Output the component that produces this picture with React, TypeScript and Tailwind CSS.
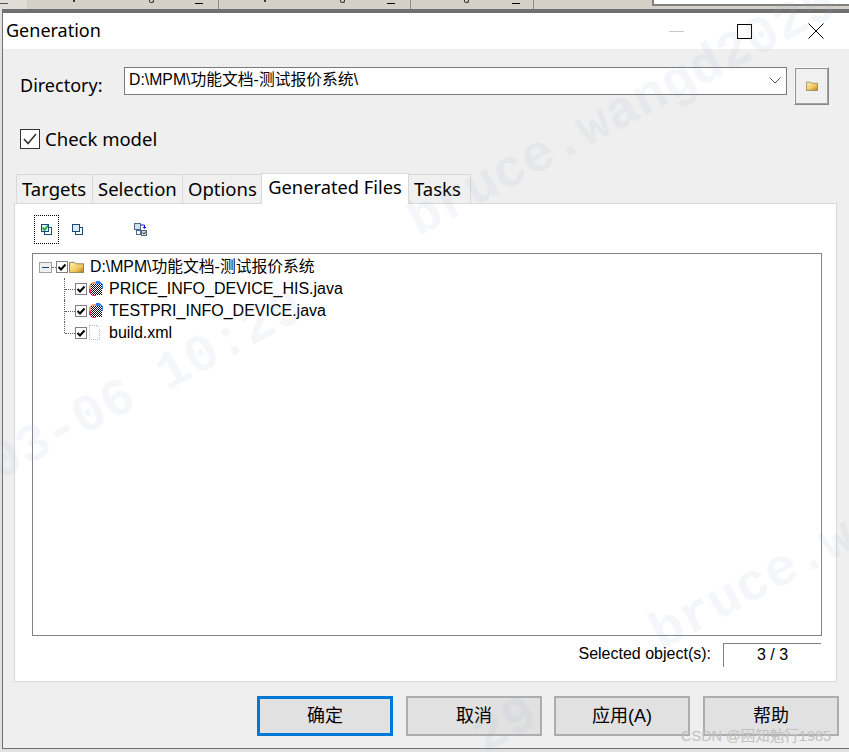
const sans = "font-['Segoe_UI','Noto_Sans','Noto_Sans_CJK_SC',sans-serif]";
const arial = "font-['Liberation_Sans','Noto_Sans_CJK_SC',sans-serif]";

const TABS = [
  { label: "Targets", w: "w-[76px]" },
  { label: "Selection", w: "w-[90px]" },
  { label: "Options", w: "w-[79px]" },
];

const FILES = [
  { name: "PRICE_INFO_DEVICE_HIS.java", kind: "java" },
  { name: "TESTPRI_INFO_DEVICE.java", kind: "java" },
  { name: "build.xml", kind: "xml" },
];

const BUTTONS = ["确定", "取消", "应用(A)", "帮助"];

function TreeCheck() {
  return (
    <span className="flex h-[12px] w-[12px] shrink-0 items-center justify-center border border-[#808080] bg-white">
      <svg width="10" height="10" viewBox="0 0 10 10">
        <path d="M1.5 5 L4 7.5 L8.5 2.5" fill="none" stroke="#000" strokeWidth="2" />
      </svg>
    </span>
  );
}

function FolderIcon({ size = 16 }: { size?: number }) {
  return (
    <svg width={size} height={(size * 13) / 16} viewBox="0 0 16 13">
      <defs>
        <linearGradient id="fold" x1="0" y1="0" x2="1" y2="1">
          <stop offset="0" stopColor="#fff2b8" />
          <stop offset="0.6" stopColor="#f2c65a" />
          <stop offset="1" stopColor="#a87a20" />
        </linearGradient>
      </defs>
      <path d="M0.5 12.5 V1.5 H6 L7.5 3 H15.5 V12.5 Z" fill="url(#fold)" stroke="#8a7a50" strokeWidth="1" />
    </svg>
  );
}

function JavaIcon() {
  return (
    <svg width="15" height="16" viewBox="0 0 15 16" className="shrink-0" shapeRendering="crispEdges">
      <defs>
        <pattern id="dith" width="2" height="2" patternUnits="userSpaceOnUse">
          <rect width="2" height="2" fill="#ffffff" />
          <rect width="1" height="1" fill="#111" />
          <rect x="1" y="1" width="1" height="1" fill="#111" />
        </pattern>
      </defs>
      <path d="M4 1 H8 V8 H1 V4 H2 V3 H3 V2 H4 Z" fill="#f0a060" />
      <path d="M8 0 H12 V1 H13 V2 H14 V3 H15 V8 H8 Z" fill="#3080f0" />
      <path d="M1 8 H8 V15 H4 V14 H3 V13 H2 V12 H1 Z" fill="#e83070" />
      <rect x="3" y="3" width="11" height="11" fill="url(#dith)" />
    </svg>
  );
}

function XmlIcon() {
  return (
    <svg width="13" height="16" viewBox="0 0 13 16" className="shrink-0" shapeRendering="crispEdges">
      <path d="M1.5 0.5 H8.5 L11.5 3.5 V14.5 H1.5 Z" fill="#fff" stroke="#b8b8b8" strokeDasharray="1 1" />
    </svg>
  );
}

function ToolIcon({ which }: { which: "all" | "none" | "swap" }) {
  if (which === "swap") {
    return (
      <svg width="13" height="13" viewBox="0 0 13 13">
        <rect x="0.5" y="0.5" width="6" height="6" fill="#cfe0f0" stroke="#4a6a8c" />
        <path d="M7 2 H10.5 V5 M9 4 L10.5 5.5 L12 4" fill="none" stroke="#1010e0" />
        <rect x="2.5" y="7.5" width="4" height="4" fill="#fff" stroke="#4a6a8c" />
        <rect x="7.5" y="7.5" width="5" height="5" fill="#d8d8d8" stroke="#4a6a8c" />
        <path d="M8.5 9.5 L10 11 L12 8.5" fill="none" stroke="#333" />
      </svg>
    );
  }
  return (
    <svg width="11" height="11" viewBox="0 0 11 11">
      <rect x="3.5" y="3.5" width="7" height="7" fill="#fff" stroke="#17497a" />
      <rect x="0.5" y="0.5" width="7" height="7" fill="#dcebf8" stroke="#17497a" />
      {which === "all" && <path d="M1.5 3.5 L3.5 6 L7 1.5" fill="none" stroke="#10a030" strokeWidth="1.5" />}
    </svg>
  );
}

function Watermark({ text, className }: { text: string; className: string }) {
  return (
    <span
      className={`pointer-events-none absolute origin-left rotate-[-28deg] whitespace-nowrap font-['Liberation_Mono',monospace] text-[53px] leading-none font-bold text-[#8fa8c0]/10 ${className}`}
    >
      {text}
    </span>
  );
}

export default function App() {
  return (
    <div className={`relative h-[752px] w-[849px] overflow-hidden bg-[#e2e2e2] ${sans}`}>
      {/* strip of the window behind, its text is cut off at the top */}
      <div className="flex h-[9px] bg-[#d4d0c8]">
        <div className="relative w-[27px] bg-[#e0ddd6]">
          <span className="absolute left-0 top-[3px] h-px w-[8px] bg-[#555]" />
        </div>
        <div className="relative w-[192px] border-r border-[#8c8c8c]">
          <span className="absolute left-[46px] top-0 h-[2px] w-[2px] bg-[#333]" />
          <span className="absolute left-[122px] top-0 h-[3px] w-[5px] rounded-b-full border-b border-x border-[#333]" />
          <span className="absolute left-[168px] top-[3px] h-px w-[8px] bg-black" />
        </div>
        <div className="relative w-[192px] border-r border-[#8c8c8c]">
          <span className="absolute left-[45px] top-0 h-[2px] w-[2px] bg-[#333]" />
          <span className="absolute left-[121px] top-0 h-[3px] w-[5px] rounded-b-full border-b border-x border-[#333]" />
          <span className="absolute left-[168px] top-[3px] h-px w-[8px] bg-black" />
        </div>
        <div className="relative w-[123px] border-r border-[#8c8c8c]">
          <span className="absolute left-[53px] top-0 h-[3px] w-[5px] rounded-b-full border-b border-x border-[#333]" />
          <span className="absolute left-[101px] top-[3px] h-px w-[8px] bg-black" />
        </div>
        <div className="w-[118px]" />
        <div className="h-[6px] flex-1 border-b-2 border-l-2 border-[#808080] bg-white" />
      </div>
      <div className="ml-[2px] flex h-[740px] flex-col border-t-4 border-b border-l border-[#707070] bg-[#efefef]">
        <div className="flex h-[36px] shrink-0 items-center justify-between bg-white pl-[3px]">
          <span className="-mt-[2px] text-[18px] leading-none text-black">Generation</span>
          <div className="flex items-center">
            <div className="mr-[53px] h-px w-[15px] bg-[#c8c8c8]" />
            <div className="mr-[56px] h-[15px] w-[15px] border border-black" />
            <svg width="16" height="16" viewBox="0 0 16 16" className="mr-[25px]">
              <path d="M0.5 0.5 L15.5 15.5 M15.5 0.5 L0.5 15.5" stroke="#000" strokeWidth="1" />
            </svg>
          </div>
        </div>

        <div className="flex h-[48px] items-start pt-[18px] pl-[17px]">
          <span className="mt-[6px] w-[104px] text-[18px] leading-[24px] text-black">Directory:</span>
          <div className={`flex h-[28px] w-[663px] items-center justify-between border border-[#7a7a7a] bg-white pl-[4px] pr-[5px] text-[15.8px] text-black ${arial}`}>
            <span className="-mt-[2px]">D:\MPM\功能文档-测试报价系统\</span>
            <svg width="12" height="7" viewBox="0 0 12 7" className="-mt-[2px]">
              <path d="M0.5 0.5 L6 6 L11.5 0.5" fill="none" stroke="#555" />
            </svg>
          </div>
          <div className="ml-[7px] flex h-[38px] w-[35px] items-center justify-center border border-[#8a8a8a] border-t-[#f8f8f8] border-l-[#f8f8f8] bg-[#f0f0f0] shadow-[inset_-1px_-1px_0_#a0a0a0,inset_1px_1px_0_#909090]">
            <FolderIcon size={12} />
          </div>
        </div>

        <div className="mt-[30px] flex h-[24px] items-center pl-[17px]">
          <span className="flex h-[20px] w-[20px] items-center justify-center border border-[#333] bg-white">
            <svg width="14" height="12" viewBox="0 0 14 12">
              <path d="M1 6 L5 10.5 L13 1" fill="none" stroke="#333" strokeWidth="1.6" />
            </svg>
          </span>
          <span className="ml-[5px] text-[18.5px] leading-none text-black">Check model</span>
        </div>

        <div className="ml-[11px] mt-[22px] flex h-[30px] items-end">
          <div className="ml-[2px] flex items-end">
            {TABS.map((t) => (
              <div
                key={t.label}
                className={`flex h-[29px] items-center border-t border-l border-[#d9d9d9] bg-[#f0f0f0] pl-[5px] text-[18.5px] leading-none text-black ${t.w}`}
              >
                {t.label}
              </div>
            ))}
            <div className="z-10 -mb-px flex h-[31px] w-[148px] items-start justify-center border-x border-t border-[#d9d9d9] bg-white pt-[3px] text-[18.3px] leading-[20px] text-black">
              Generated Files
            </div>
            <div className="flex h-[29px] w-[62px] items-center border-t border-r border-[#d9d9d9] bg-[#f0f0f0] pl-[5px] text-[18.5px] leading-none text-black">
              Tasks
            </div>
          </div>
        </div>

        <div className="ml-[11px] flex h-[479px] w-[823px] flex-col border border-[#d9d9d9] bg-white">
          <div className="ml-[19px] mt-[11px] flex h-[29px] items-center">
            <div className="flex h-[29px] w-[25px] items-center justify-center border border-dotted border-black">
              <ToolIcon which="all" />
            </div>
            <div className="flex w-[37px] justify-center">
              <ToolIcon which="none" />
            </div>
            <div className="ml-[32px] flex w-[25px] justify-center">
              <ToolIcon which="swap" />
            </div>
          </div>

          <div className={`mx-[17px] mt-[9px] h-[383px] w-[790px] border border-[#82828c] bg-white pt-[2px] text-[16px] text-black ${arial}`}>
            <div className="relative flex h-[22px] items-center pl-[6px]">
              <span className="flex h-[11px] w-[13px] items-center justify-center border border-[#a0a0a0] bg-[#f0f0f0]">
                <span className="h-px w-[7px] bg-[#204080]" />
              </span>
              <span className="w-[4px] border-t border-dotted border-[#606060]" />
              <TreeCheck />
              <span className="ml-[1px] flex w-[19px] items-center">
                <FolderIcon size={15} />
              </span>
              <span className="ml-[2px] text-[15.8px] leading-none">D:\MPM\功能文档-测试报价系统</span>
            </div>
            {FILES.map((f, i) => (
              <div key={f.name} className="relative flex h-[22px] items-center pl-[42px]">
                <span className={`absolute left-[31px] top-0 w-px border-l border-dotted border-[#606060] ${i === 2 ? "h-[11px]" : "h-[22px]"}`} />
                <span className="absolute left-[32px] top-[11px] w-[10px] border-t border-dotted border-[#606060]" />
                <TreeCheck />
                <span className="ml-[1px] flex h-[16px] w-[19px] items-start">
                  {f.kind === "java" ? <JavaIcon /> : <XmlIcon />}
                </span>
                <span className="ml-[2px] leading-none">{f.name}</span>
              </div>
            ))}
          </div>

          <div className="mt-[7px] flex items-center justify-end pr-[15px]">
            <span className={`mr-[12px] -mt-[2px] text-[16px] leading-none text-black ${arial}`}>Selected object(s):</span>
            <div className={`flex h-[24px] w-[98px] items-center justify-center border-t border-l border-[#808080] pb-[1px] text-[16px] text-black ${arial}`}>
              3 / 3
            </div>
          </div>
        </div>

        <div className="mt-[14px] flex pl-[254px]">
          {BUTTONS.map((b, i) => (
            <div
              key={b}
              className={`flex h-[40px] w-[136px] items-center justify-center bg-[#e1e1e1] text-[18px] leading-none text-black ${arial} ${
                i === 0 ? "border-[3px] border-[#0078d7]" : "border-2 border-[#adadad]"
              } ${i === 0 ? "mr-[13px]" : i === 1 ? "mr-[12px]" : i === 2 ? "mr-[13px]" : ""}`}
            >
              {b}
            </div>
          ))}
        </div>
      </div>

      <Watermark text="bruce.wangd2025" className="left-[412px] top-[198px]" />
      <Watermark text="03-06 10:29" className="left-[-8px] top-[442px]" />
      <Watermark text="bruce.wa" className="left-[655px] top-[612px]" />
      <Watermark text="29" className="left-[478px] top-[715px]" />
      <span className={`absolute left-[681px] top-[729px] text-[14.5px] leading-none text-[#c0c0c0] ${arial}`}>
        CSDN @困知勉行1985
      </span>
    </div>
  );
}
